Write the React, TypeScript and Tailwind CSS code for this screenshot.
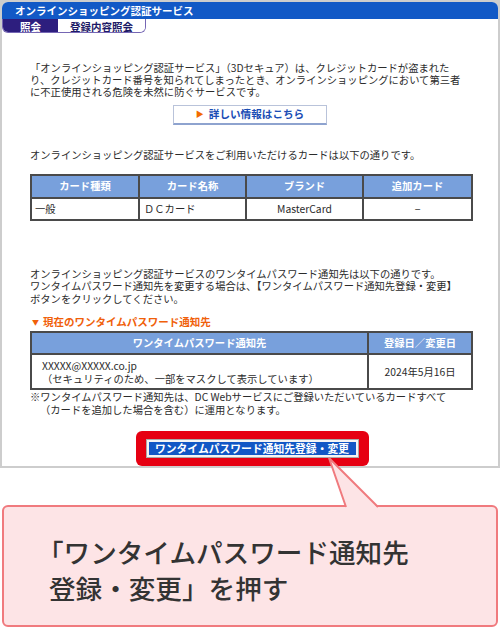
export default function App() {
  return (
    <div className="relative w-[500px] h-[630px] bg-white font-['Noto_Sans_CJK_JP',sans-serif] text-[#2b2b2b] overflow-hidden">
      {/* 画面キャプチャ部分 */}
      <div className="bg-[#cdcdcd] p-[2px]">
        <div className="bg-white rounded-t-[6px] h-[464px] flex flex-col">
          <div className="h-[17px] bg-[#1259c6] rounded-t-[6px] pl-[13px] text-white font-bold text-[10.5px] leading-[17px]">
            オンラインショッピング認証サービス
          </div>
          <div className="flex h-[16px] w-[144px] border border-t-0 border-[#7566b4] rounded-b-[6px] overflow-hidden text-[10.5px] font-bold leading-[15px]">
            <div className="w-[55px] bg-[#2d1e7e] text-white text-center">照会</div>
            <div className="flex-1 bg-white text-[#1d1a66] text-center">登録内容照会</div>
          </div>

          <div className="px-[28px]">
            <p className="mt-[29px] text-[10.3px] leading-[12px] whitespace-nowrap">
              「オンラインショッピング認証サービス」（3Dセキュア）は、クレジットカードが盗まれた
              <br />
              り、クレジットカード番号を知られてしまったとき、オンラインショッピングにおいて第三者
              <br />
              に不正使用される危険を未然に防ぐサービスです。
            </p>

            <div className="flex justify-center mt-[7px]">
              <div className="w-[154px] h-[20px] border border-[#b9c3da] border-b-2 border-b-[#8ea3cf] bg-white flex items-center justify-center gap-[5px]">
                <span className="text-[#f26a00] text-[8px] leading-none">▶</span>
                <span className="text-[#1a4db5] font-bold text-[10.6px] leading-none">詳しい情報はこちら</span>
              </div>
            </div>

            <p className="mt-[24px] text-[10.3px] leading-[12px] whitespace-nowrap">
              オンラインショッピング認証サービスをご利用いただけるカードは以下の通りです。
            </p>

            <table className="mt-[13px] w-[441px] border-collapse border-2 border-[#4a4a4a] text-[10.3px] table-fixed">
              <colgroup>
                <col className="w-[108px]" />
                <col className="w-[107px]" />
                <col className="w-[117px]" />
                <col className="w-[109px]" />
              </colgroup>
              <thead>
                <tr className="h-[23px] bg-[#78a0dc] text-white font-bold">
                  <th className="border-2 border-[#4a4a4a] font-bold">カード種類</th>
                  <th className="border-2 border-[#4a4a4a] font-bold">カード名称</th>
                  <th className="border-2 border-[#4a4a4a] font-bold">ブランド</th>
                  <th className="border-2 border-[#4a4a4a] font-bold">追加カード</th>
                </tr>
              </thead>
              <tbody>
                <tr className="h-[22px]">
                  <td className="border-2 border-[#4a4a4a] pl-[3px]">一般</td>
                  <td className="border-2 border-[#4a4a4a] pl-[4px]">ＤＣカード</td>
                  <td className="border-2 border-[#4a4a4a] text-center">MasterCard</td>
                  <td className="border-2 border-[#4a4a4a] text-center">−</td>
                </tr>
              </tbody>
            </table>

            <p className="mt-[47px] text-[10.3px] leading-[12.5px] whitespace-nowrap">
              オンラインショッピング認証サービスのワンタイムパスワード通知先は以下の通りです。
              <br />
              ワンタイムパスワード通知先を変更する場合は、【ワンタイムパスワード通知先登録・変更】
              <br />
              ボタンをクリックしてください。
            </p>

            <div className="mt-[11px] flex items-center gap-[4px] text-[#f0600a] font-bold text-[10.5px] leading-[12px]">
              <span className="text-[7px] pl-[2px]">▼</span>
              <span>現在のワンタイムパスワード通知先</span>
            </div>

            <table className="mt-[3px] w-[441px] border-collapse border-2 border-[#4a4a4a] text-[10.3px] table-fixed">
              <colgroup>
                <col className="w-[337px]" />
                <col className="w-[104px]" />
              </colgroup>
              <thead>
                <tr className="h-[22px] bg-[#78a0dc] text-white">
                  <th className="border-2 border-[#4a4a4a] font-bold">ワンタイムパスワード通知先</th>
                  <th className="border-2 border-[#4a4a4a] font-bold">登録日／変更日</th>
                </tr>
              </thead>
              <tbody>
                <tr className="h-[35px]">
                  <td className="border-2 border-[#4a4a4a] pl-[10px] leading-[13px]">
                    XXXXX@XXXXX.co.jp
                    <br />
                    （セキュリティのため、一部をマスクして表示しています）
                  </td>
                  <td className="border-2 border-[#4a4a4a] text-center">2024年5月16日</td>
                </tr>
              </tbody>
            </table>

            <p className="text-[10.3px] leading-[13px] whitespace-nowrap">
              ※ワンタイムパスワード通知先は、DC Webサービスにご登録いただいているカードすべて
              <br />
              <span className="pl-[10px]">（カードを追加した場合を含む）に運用となります。</span>
            </p>
          </div>

          <div className="mt-[15px] flex justify-center pl-[4px]">
            <div className="bg-[#e60012] rounded-[6px] px-[10px] py-[8px]">
              <div className="border border-[#a9a9a9] bg-[#f4f4f4] p-[2px]">
                <div className="w-[207px] h-[13px] bg-[#1257c5] text-white font-bold text-[10.8px] leading-[13px] text-center whitespace-nowrap">
                  ワンタイムパスワード通知先登録・変更
                </div>
              </div>
            </div>
          </div>
        </div>
      </div>

      {/* 吹き出し */}
      <div className="mt-[37px] mx-[2px] h-[122px] border-2 border-[#f07a7e] bg-[#fde4e6] rounded-[6px] pt-[27px] pl-[45px] text-[#333333] text-[26.6px] font-medium leading-[36px] whitespace-nowrap">
        <div className="-ml-[12px]">「ワンタイムパスワード通知先</div>
        <div>登録・変更」を押す</div>
      </div>

      <svg className="absolute left-[320px] top-[452px]" width="70" height="60" viewBox="0 0 70 60">
        <polygon points="9,6 26,56 58,56" fill="#fde4e6" />
        <path d="M26 55 L9 6 L58 55" fill="none" stroke="#f07a7e" strokeWidth="2" strokeLinejoin="miter" />
      </svg>
    </div>
  );
}
